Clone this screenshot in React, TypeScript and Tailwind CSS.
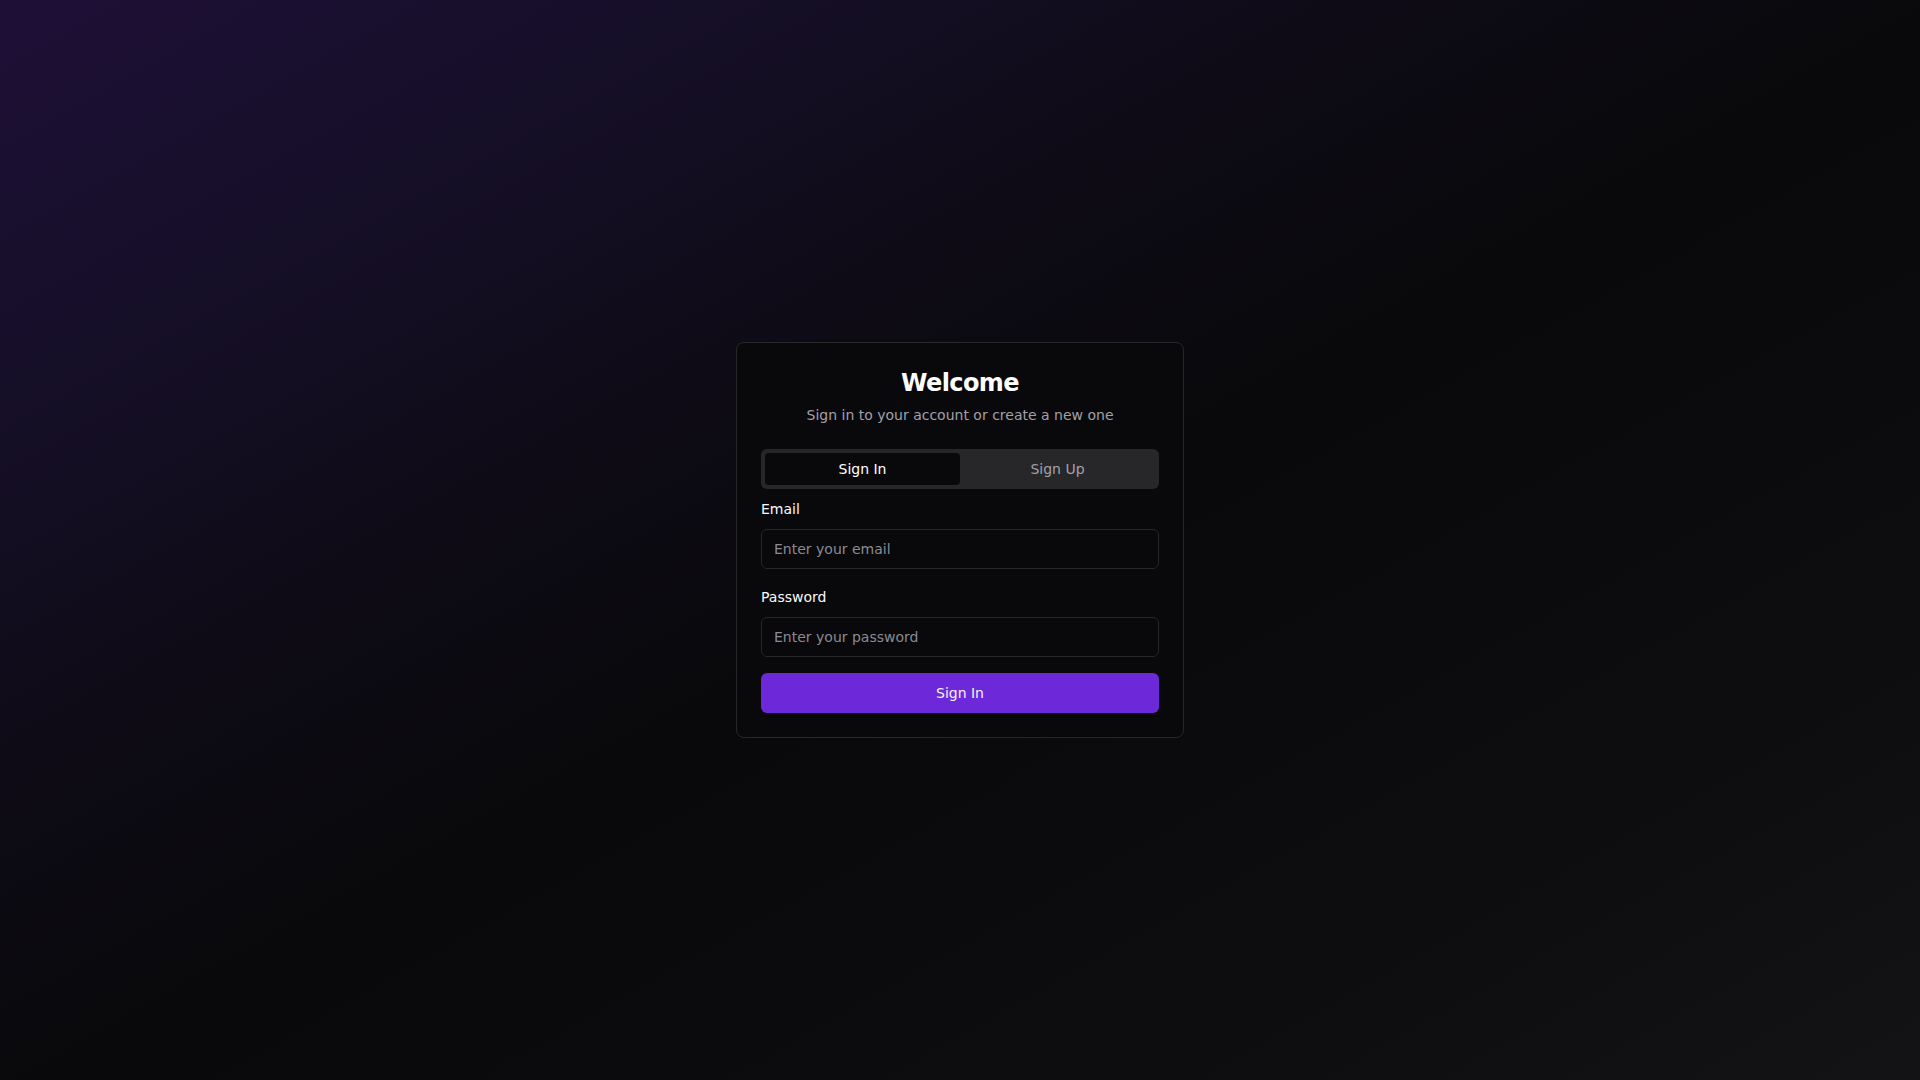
import { useState } from 'react';

export default function App() {
  const [tab, setTab] = useState<'signin' | 'signup'>('signin');

  return (
    <div className="min-h-screen w-full flex items-center justify-center font-['DejaVu_Sans',sans-serif] bg-[#0a0a0c] bg-[linear-gradient(to_bottom_right,#1f0f37_0%,#170f2c_14%,#120d1e_28%,#0c0a12_40%,#09090b_52%,#0b0b0d_68%,#0e0e10_82%,#131315_100%)]">
      <div className="w-[448px] rounded-lg border border-[#27272a] bg-[#09090b] px-6 pt-6 pb-6">
        <div className="flex flex-col items-center text-center">
          <h1 className="text-2xl font-bold leading-8 tracking-tight text-white">Welcome</h1>
          <p className="mt-1.5 text-sm leading-5 text-[#a1a1aa]">Sign in to your account or create a new one</p>
        </div>

        <div className="mt-6 grid h-10 grid-cols-2 rounded-md bg-[#27272a] p-1">
          <button
            onClick={() => setTab('signin')}
            className={
              tab === 'signin'
                ? 'rounded-sm bg-[#09090b] text-sm text-white'
                : 'rounded-sm text-sm text-[#a1a1aa]'
            }
          >
            Sign In
          </button>
          <button
            onClick={() => setTab('signup')}
            className={
              tab === 'signup'
                ? 'rounded-sm bg-[#09090b] text-sm text-white'
                : 'rounded-sm text-sm text-[#a1a1aa]'
            }
          >
            Sign Up
          </button>
        </div>

        <form className="mt-2.5 flex flex-col" onSubmit={(e) => e.preventDefault()}>
          <label className="text-sm font-normal leading-5 text-[#fafafa]">Email</label>
          <input
            type="email"
            placeholder="Enter your email"
            className="mt-2.5 h-10 w-full rounded-md border border-[#27272a] bg-[#09090b] px-3 text-sm text-white placeholder:text-[#8b8b93] outline-none"
          />
          <label className="mt-[18px] text-sm font-normal leading-5 text-[#fafafa]">Password</label>
          <input
            type="password"
            placeholder="Enter your password"
            className="mt-2.5 h-10 w-full rounded-md border border-[#27272a] bg-[#09090b] px-3 text-sm text-white placeholder:text-[#8b8b93] outline-none"
          />
          <button type="submit" className="mt-4 h-10 w-full rounded-md bg-[#6d28d9] text-sm text-[#f5f3ff]">
            Sign In
          </button>
        </form>
      </div>
    </div>
  );
}
